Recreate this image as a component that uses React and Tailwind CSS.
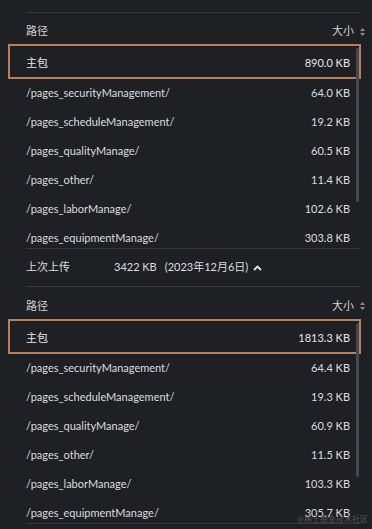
import React from "react";

const font = { fontFamily: 'Lato, "Noto Sans CJK SC", sans-serif' };

function SortIcon() {
  return (
    <svg width="7" height="10" viewBox="0 0 7 10" className="ml-[5px]">
      <path d="M3.5 1 L6 4 L1 4 Z" fill="#8a8c90" />
      <path d="M3.5 9 L6 6 L1 6 Z" fill="#8a8c90" />
    </svg>
  );
}

function Section({ rows, main, top }) {
  return (
    <div>
      <div
        className={
          (top ? "border-t border-[#36383c] " : "") +
          "ml-[26px] mr-[12px] h-[32px] flex items-center justify-between text-[11px] text-[#d2d3d5] pt-[6px]"
        }
      >
        <span>路径</span>
        <span className="flex items-center mr-[-6px]">
          大小
          <SortIcon />
        </span>
      </div>
      <div className="relative ml-[8px] mr-[11px] h-[204px] overflow-hidden">
        <div className="h-[35px] border-2 border-[#b9805c] flex items-center justify-between pl-[16px] pr-[9px] text-[11px] text-[#e4e5e7]">
          <span className="pt-[3px]">主包</span>
          <span className="pt-[3px]">{main}</span>
        </div>
        {rows.map(([p, s]) => (
          <div key={p} className="h-[29px] flex items-center justify-between pl-[18px] pr-[11px] text-[11px] text-[#dcdddf]">
            <span>{p}</span>
            <span>{s}</span>
          </div>
        ))}
        <div className="absolute right-[2px] top-[4px] w-[3px] h-[154px] rounded-full bg-[#46484d] z-10" />
      </div>
      <div className="ml-[26px] mr-[12px] border-b border-[#36383c]" />
    </div>
  );
}

export default function App() {
  const a = [
    ["/pages_securityManagement/", "64.0 KB"],
    ["/pages_scheduleManagement/", "19.2 KB"],
    ["/pages_qualityManage/", "60.5 KB"],
    ["/pages_other/", "11.4 KB"],
    ["/pages_laborManage/", "102.6 KB"],
    ["/pages_equipmentManage/", "303.8 KB"],
  ];
  const b = [
    ["/pages_securityManagement/", "64.4 KB"],
    ["/pages_scheduleManagement/", "19.3 KB"],
    ["/pages_qualityManage/", "60.9 KB"],
    ["/pages_other/", "11.5 KB"],
    ["/pages_laborManage/", "103.3 KB"],
    ["/pages_equipmentManage/", "305.7 KB"],
  ];
  return (
    <div className="relative w-[372px] h-[529px] bg-[#1f2023] overflow-hidden pt-[12px]" style={font}>
      <Section rows={a} main="890.0 KB" top />
      <div className="ml-[26px] mr-[12px] h-[38px] flex items-center text-[11px] text-[#dcdddf] border-b border-[#36383c]">
        <span className="w-[88px]">上次上传</span>
        <span>3422 KB</span>
        <span className="ml-[8px]">(2023年12月6日)</span>
        <svg width="9" height="6" viewBox="0 0 9 6" className="ml-[5px]">
          <path d="M1 5 L4.5 1.5 L8 5" stroke="#e6e6e6" strokeWidth="1.8" fill="none" />
        </svg>
      </div>
      <Section rows={b} main="1813.3 KB" />
      <div className="absolute right-[4px] bottom-[5px] text-[8px] leading-[10px] text-[#6a6c70] opacity-70">@稀土掘金技术社区</div>
    </div>
  );
}
